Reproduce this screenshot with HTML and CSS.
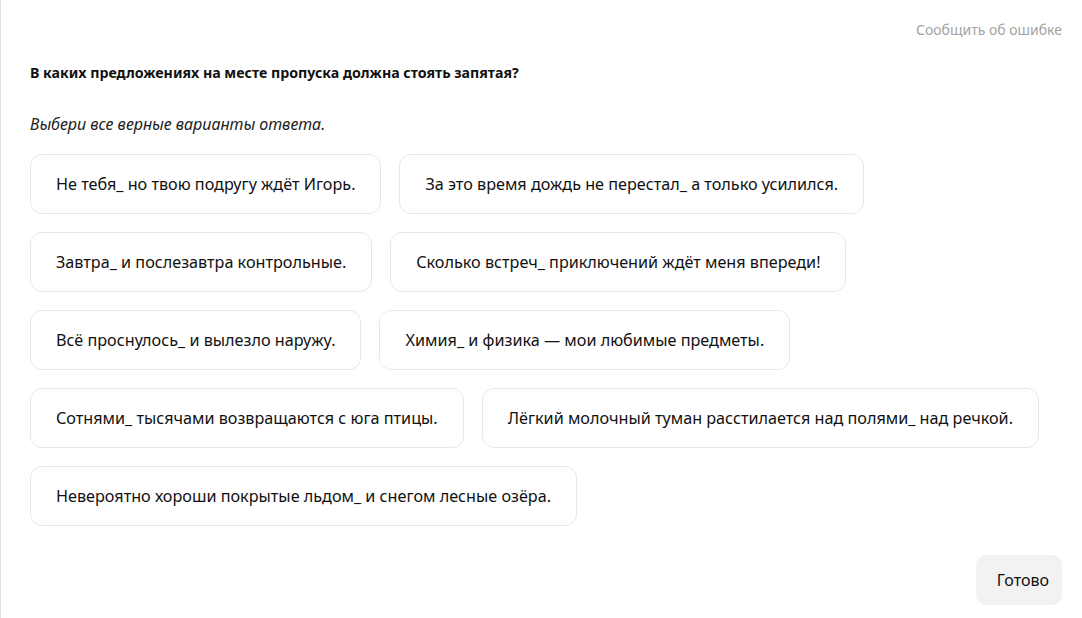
FILE: index.html
```html
<!DOCTYPE html>
<html lang="ru">

<head>
  <meta charset="UTF-8">
  <meta name="viewport" content="width=device-width, initial-scale=1.0">
  <title>Задание</title>
  <link rel="stylesheet" href="styles.css">
</head>

<body>
  <div class="task">
    <div class="top">
      <a class="report" href="#">Сообщить об ошибке</a>
    </div>
    <h1 class="question">В каких предложениях на месте пропуска должна стоять запятая?</h1>
    <p class="hint">Выбери все верные варианты ответа.</p>

    <div class="options">
      <div class="row">
        <div class="option">Не тебя_ но твою подругу ждёт Игорь.</div>
        <div class="option">За это время дождь не перестал_ а только усилился.</div>
      </div>
      <div class="row">
        <div class="option">Завтра_ и послезавтра контрольные.</div>
        <div class="option">Сколько встреч_ приключений ждёт меня впереди!</div>
      </div>
      <div class="row">
        <div class="option">Всё проснулось_ и вылезло наружу.</div>
        <div class="option">Химия_ и физика — мои любимые предметы.</div>
      </div>
      <div class="row">
        <div class="option">Сотнями_ тысячами возвращаются с юга птицы.</div>
        <div class="option">Лёгкий молочный туман расстилается над полями_ над речкой.</div>
      </div>
      <div class="row">
        <div class="option">Невероятно хороши покрытые льдом_ и снегом лесные озёра.</div>
      </div>
    </div>

    <div class="bottom">
      <button class="done">Готово</button>
    </div>
  </div>
</body>

</html>
```

FILE: styles.css
```css
* {
  box-sizing: border-box;
}

body {
  margin: 0;
  background-color: #fff;
  font-family: "Noto Sans", "Open Sans", sans-serif;
  color: #111;
}

.task {
  height: 618px;
  border-left: 1px solid #e3e3e3;
  padding: 20px 20px 0 29px;
}

.top {
  display: flex;
  justify-content: flex-end;
}

.report {
  font-size: 14px;
  line-height: 20px;
  color: #a3a3a3;
  text-decoration: none;
}

.question {
  margin: 23px 0 0 0;
  font-size: 14.2px;
  line-height: 20px;
  font-weight: 700;
}

.hint {
  margin: 30px 0 0 0;
  font-size: 16px;
  line-height: 22px;
  font-style: italic;
  color: #222;
}

.options {
  margin-top: 19px;
  display: flex;
  flex-direction: column;
  gap: 18px;
}

.row {
  display: flex;
  gap: 18px;
}

.option {
  height: 60px;
  padding: 0 25px;
  display: flex;
  align-items: center;
  border: 1px solid #e8e8e8;
  border-radius: 12px;
  font-size: 16.2px;
  white-space: nowrap;
  cursor: pointer;
}

.bottom {
  margin-top: 29px;
  display: flex;
  justify-content: flex-end;
}

.done {
  height: 50px;
  padding: 0 13px 0 21px;
  border: none;
  border-radius: 10px;
  background-color: #f2f2f2;
  font-family: inherit;
  font-size: 16px;
  color: #111;
  cursor: pointer;
}
```
